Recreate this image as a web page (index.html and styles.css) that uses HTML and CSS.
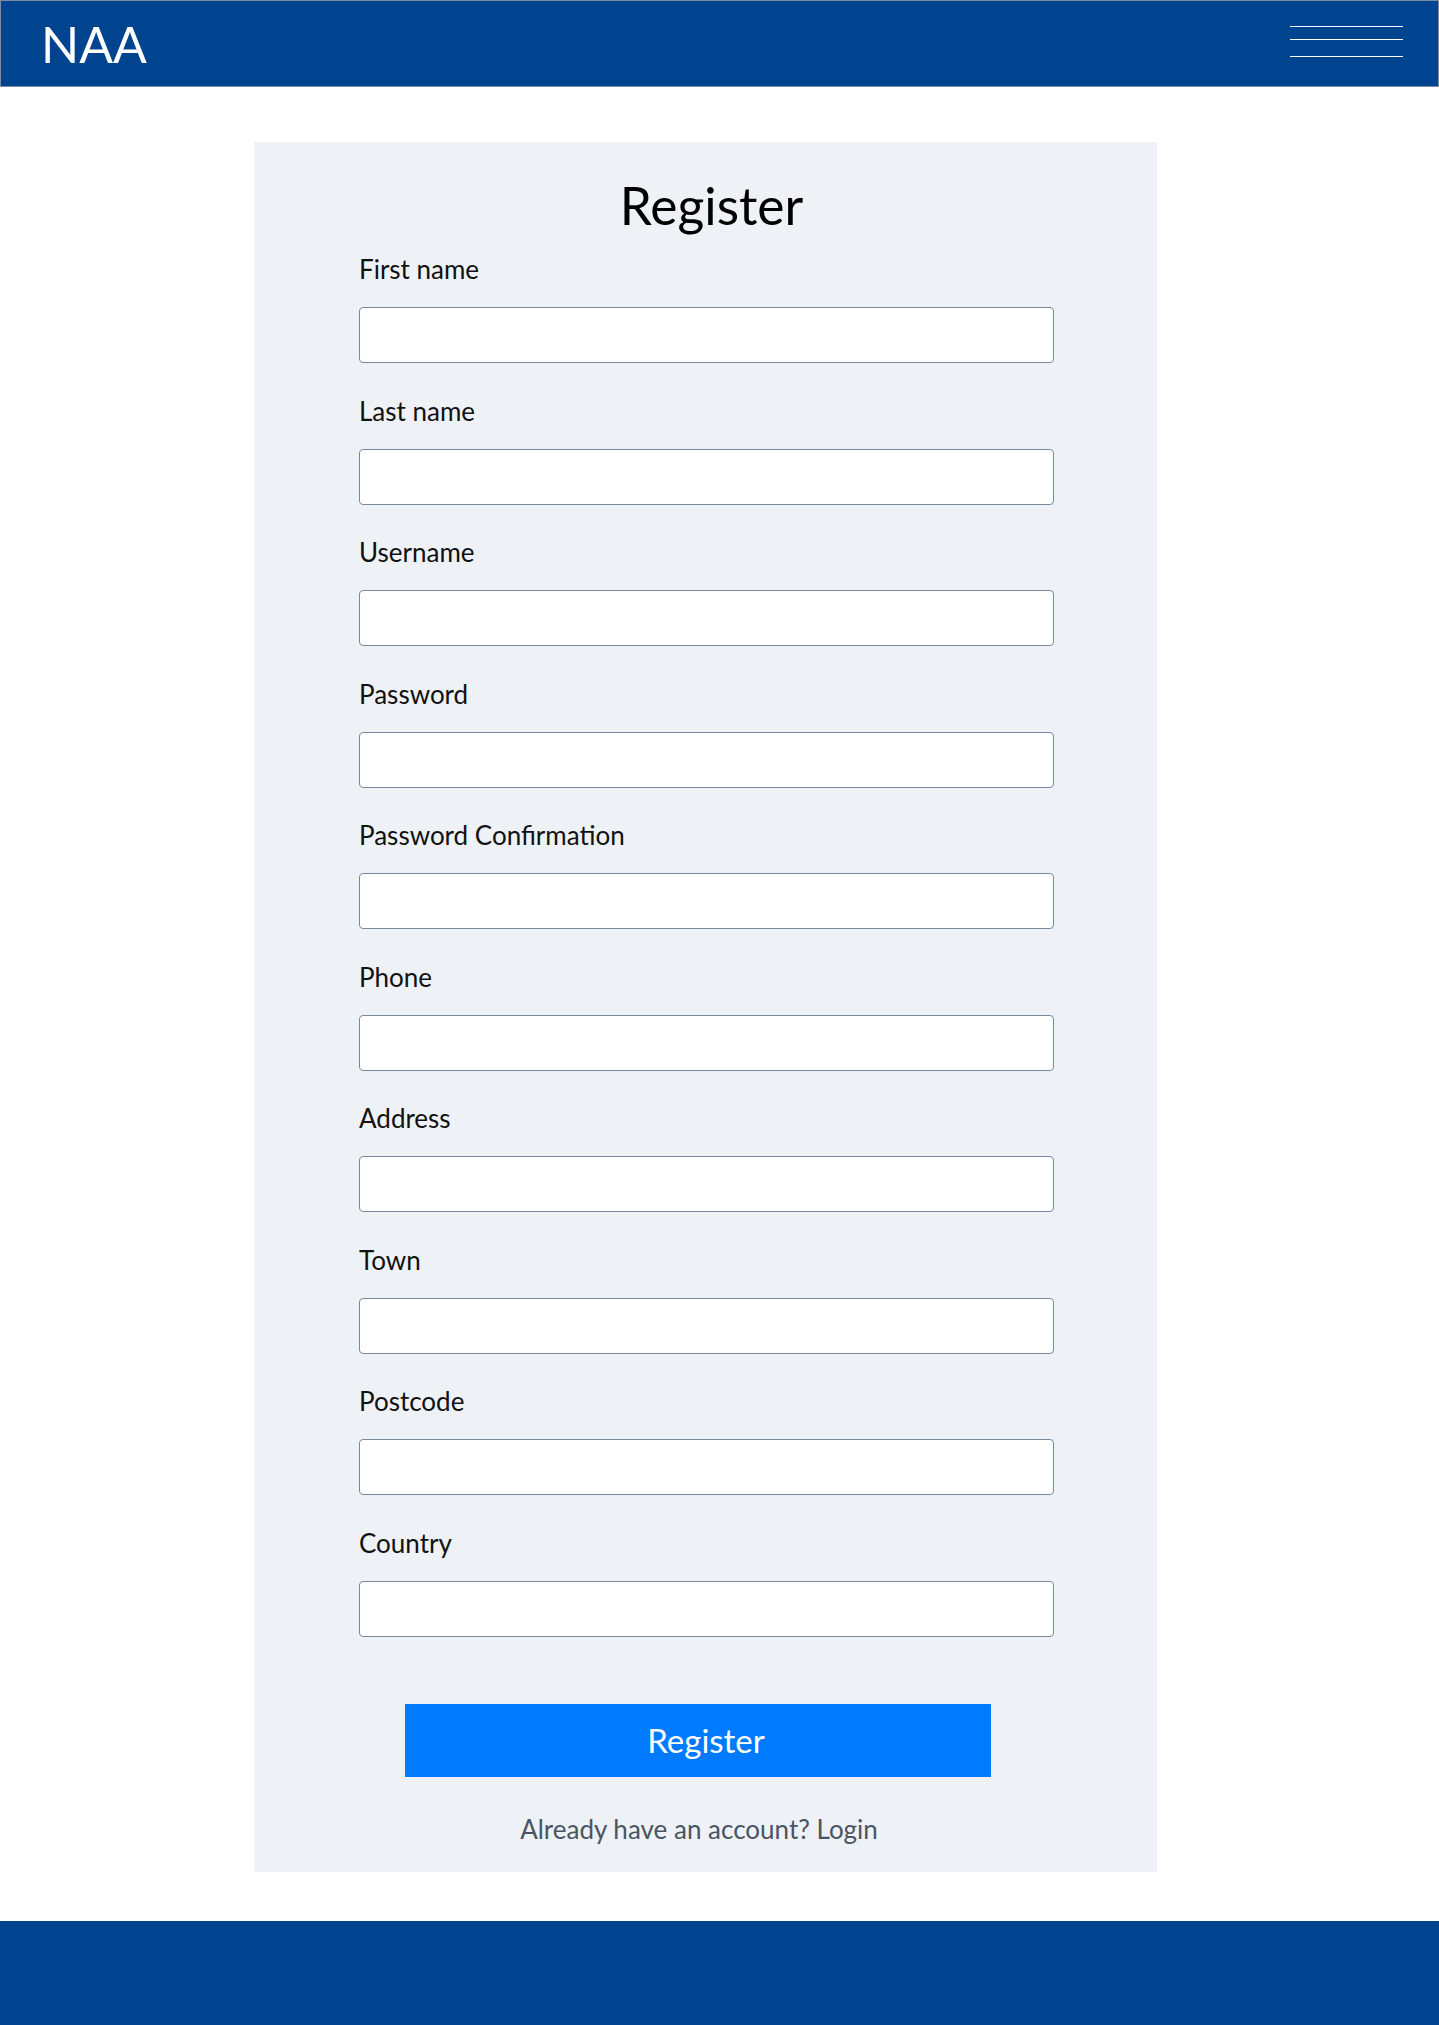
FILE: index.html
```html
<!DOCTYPE html>
<html lang="en">
<head>
<meta charset="utf-8">
<title>Register - NAA</title>
<link rel="stylesheet" href="styles.css">
</head>
<body>
<header class="topbar">
  <a class="brand" href="#">NAA</a>
  <button class="burger" aria-label="Menu">
    <span class="burger-line"></span>
    <span class="burger-line l2"></span>
    <span class="burger-line l3"></span>
  </button>
</header>
<main class="page">
  <section class="card">
    <h1 class="title">Register</h1>
    <form class="form">
      <div class="field"><label class="label">First name</label><input class="input" type="text"></div>
      <div class="field"><label class="label">Last name</label><input class="input" type="text"></div>
      <div class="field"><label class="label">Username</label><input class="input" type="text"></div>
      <div class="field"><label class="label">Password</label><input class="input" type="password"></div>
      <div class="field"><label class="label">Password Confirmation</label><input class="input" type="password"></div>
      <div class="field"><label class="label">Phone</label><input class="input" type="text"></div>
      <div class="field"><label class="label">Address</label><input class="input" type="text"></div>
      <div class="field"><label class="label">Town</label><input class="input" type="text"></div>
      <div class="field"><label class="label">Postcode</label><input class="input" type="text"></div>
      <div class="field"><label class="label">Country</label><input class="input" type="text"></div>
      <button class="submit" type="button">Register</button>
      <p class="alt">Already have an account? Login</p>
    </form>
  </section>
</main>
<footer class="footer"></footer>
</body>
</html>
```

FILE: styles.css
```css
html, body {
  margin: 0;
  padding: 0;
  background: #ffffff;
  font-family: Lato, "Open Sans", "Liberation Sans", sans-serif;
}

.topbar {
  box-sizing: border-box;
  height: 87px;
  background: #00448f;
  border: 1px solid #7d8ca6;
  display: flex;
  align-items: flex-start;
  justify-content: space-between;
  padding: 0 35px 0 40px;
}

.brand {
  color: #ffffff;
  text-decoration: none;
  font-size: 50px;
  line-height: 60px;
  margin-top: 13px;
}

.burger {
  background: none;
  border: 0;
  padding: 0;
  margin-top: 25px;
  width: 113px;
  display: flex;
  flex-direction: column;
  cursor: pointer;
}

.burger-line {
  display: block;
  height: 1px;
  width: 113px;
  background: #ffffff;
}

.burger-line.l2 { margin-top: 12px; }
.burger-line.l3 { margin-top: 16px; }

.page {
  padding: 55px 0 49px 254px;
}

.card {
  box-sizing: border-box;
  width: 903px;
  background: #eef1f6;
  padding: 33px 103px 27px 105px;
}

.title {
  margin: 0;
  font-weight: 400;
  font-size: 51.5px;
  line-height: 60px;
  text-align: center;
  color: #000000;
  padding-left: 10px;
}

.form {
  margin-top: 18px;
}

.field {
  display: flex;
  flex-direction: column;
  margin-bottom: 31.5px;
}

.label {
  font-size: 26px;
  line-height: 32px;
  color: #111111;
  margin-bottom: 22px;
}

.input {
  box-sizing: border-box;
  height: 56px;
  width: 100%;
  margin: 0;
  background: #ffffff;
  border: 1px solid #7b899f;
  border-radius: 4px;
  font-family: inherit;
  font-size: 24px;
}

.submit {
  display: block;
  margin: 67px 0 0 46px;
  padding: 0 0 0 16px;
  width: 586px;
  height: 73px;
  background: #007bff;
  color: #ffffff;
  border: 0;
  font-family: inherit;
  font-size: 33px;
  cursor: pointer;
}

.alt {
  margin: 36px 0 0 0;
  padding-right: 15px;
  text-align: center;
  color: #4a5563;
  font-size: 26px;
  line-height: 32px;
}

.footer {
  height: 104px;
  background: #00448f;
}
```
